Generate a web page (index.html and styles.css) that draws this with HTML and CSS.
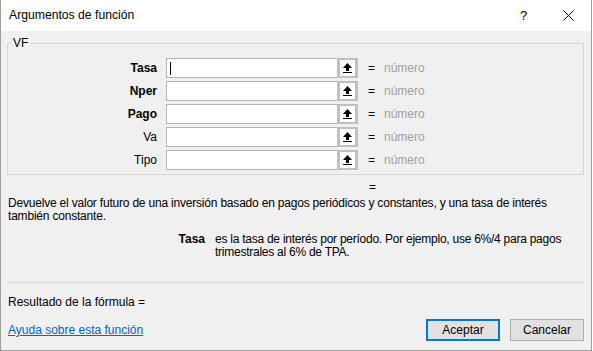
FILE: index.html
```html
<!DOCTYPE html>
<html lang="es">
<head>
<meta charset="utf-8">
<title>Argumentos de función</title>
<link rel="stylesheet" href="styles.css">
</head>
<body>
<div class="dialog">
  <div class="titlebar">
    <span class="title">Argumentos de función</span>
    <span class="tb-btn tb-help">?</span>
    <span class="tb-btn tb-close">
      <svg width="11" height="11" viewBox="0 0 11 11"><path d="M0.5 0.5 L10.5 10.5 M10.5 0.5 L0.5 10.5" stroke="#000" stroke-width="1" fill="none"/></svg>
    </span>
  </div>
  <div class="content">
    <fieldset class="group">
      <legend class="group-title">VF</legend>
      <div class="args">
        <div class="arg">
          <span class="arg-label bold">Tasa</span>
          <div class="field"><div class="input"><span class="caret"></span></div><div class="ref-btn"><span class="ref-inner"><svg width="9" height="10" viewBox="0 0 9 10"><path d="M4.5 0 L9 5 L6 5 L6 8 L3 8 L3 5 L0 5 Z" fill="#000"/><rect x="0" y="9" width="9" height="1" fill="#000"/></svg></span></div></div>
          <span class="eq">=</span><span class="val">número</span>
        </div>
        <div class="arg">
          <span class="arg-label bold">Nper</span>
          <div class="field"><div class="input"></div><div class="ref-btn"><span class="ref-inner"><svg width="9" height="10" viewBox="0 0 9 10"><path d="M4.5 0 L9 5 L6 5 L6 8 L3 8 L3 5 L0 5 Z" fill="#000"/><rect x="0" y="9" width="9" height="1" fill="#000"/></svg></span></div></div>
          <span class="eq">=</span><span class="val">número</span>
        </div>
        <div class="arg">
          <span class="arg-label bold">Pago</span>
          <div class="field"><div class="input"></div><div class="ref-btn"><span class="ref-inner"><svg width="9" height="10" viewBox="0 0 9 10"><path d="M4.5 0 L9 5 L6 5 L6 8 L3 8 L3 5 L0 5 Z" fill="#000"/><rect x="0" y="9" width="9" height="1" fill="#000"/></svg></span></div></div>
          <span class="eq">=</span><span class="val">número</span>
        </div>
        <div class="arg">
          <span class="arg-label">Va</span>
          <div class="field"><div class="input"></div><div class="ref-btn"><span class="ref-inner"><svg width="9" height="10" viewBox="0 0 9 10"><path d="M4.5 0 L9 5 L6 5 L6 8 L3 8 L3 5 L0 5 Z" fill="#000"/><rect x="0" y="9" width="9" height="1" fill="#000"/></svg></span></div></div>
          <span class="eq">=</span><span class="val">número</span>
        </div>
        <div class="arg">
          <span class="arg-label">Tipo</span>
          <div class="field"><div class="input"></div><div class="ref-btn"><span class="ref-inner"><svg width="9" height="10" viewBox="0 0 9 10"><path d="M4.5 0 L9 5 L6 5 L6 8 L3 8 L3 5 L0 5 Z" fill="#000"/><rect x="0" y="9" width="9" height="1" fill="#000"/></svg></span></div></div>
          <span class="eq">=</span><span class="val">número</span>
        </div>
      </div>
    </fieldset>
    <div class="result-eq">=</div>
    <p class="desc">Devuelve el valor futuro de una inversión basado en pagos periódicos y constantes, y una tasa de interés también constante.</p>
    <div class="argdesc">
      <span class="argdesc-name">Tasa</span>
      <span class="argdesc-text">es la tasa de interés por período. Por ejemplo, use 6%/4 para pagos trimestrales al 6% de TPA.</span>
    </div>
    <div class="sep"></div>
    <div class="formula">Resultado de la fórmula =</div>
    <div class="footer">
      <a class="help-link" href="#">Ayuda sobre esta función</a>
      <div class="buttons">
        <button class="btn btn-primary">Aceptar</button>
        <button class="btn">Cancelar</button>
      </div>
    </div>
  </div>
</div>
</body>
</html>
```
FILE: styles.css
```css
html, body {
  margin: 0;
  padding: 0;
  background: #ffffff;
}

.dialog {
  width: 592px;
  height: 351px;
  box-sizing: border-box;
  border: 1px solid #a0a0a0;
  border-top: none;
  background: #f0f0f0;
  font-family: "Liberation Sans", Arial, sans-serif;
  font-size: 12px;
  color: #000;
  display: flex;
  flex-direction: column;
}

.titlebar {
  height: 31px;
  flex: none;
  background: #ffffff;
  display: flex;
  align-items: center;
  padding-left: 8px;
}

.title {
  flex: 1;
  line-height: 31px;
  font-size: 12.2px;
}

.tb-btn {
  width: 45px;
  height: 31px;
  display: flex;
  align-items: center;
  justify-content: center;
}

.tb-help {
  font-size: 13px;
}

.tb-close svg {
  display: block;
}

.content {
  flex: 1;
  padding: 0 7px 0 6px;
  display: flex;
  flex-direction: column;
}

.group {
  margin: 4px 0 0 0;
  padding: 7px 0 4px 0;
  border: 1px solid #d5d5d5;
  min-width: 0;
}

.group-title {
  margin-left: 3px;
  padding: 0 2px;
  line-height: 16px;
  font-size: 12px;
}

.args {
  display: flex;
  flex-direction: column;
  gap: 3px;
}

.arg {
  display: flex;
  align-items: center;
  height: 20px;
  line-height: 20px;
}

.arg-label {
  width: 149px;
  text-align: right;
  margin-right: 9px;
}

.bold {
  font-weight: bold;
}

.field {
  display: flex;
  width: 192px;
  height: 20px;
}

.input {
  width: 171px;
  box-sizing: border-box;
  height: 20px;
  background: #fff;
  border: 1px solid #b4b4b4;
  border-right: none;
  padding-left: 3px;
  display: flex;
  align-items: center;
}

.caret {
  display: block;
  width: 1px;
  height: 13px;
  background: #000;
}

.ref-btn {
  width: 21px;
  height: 20px;
  box-sizing: border-box;
  background: #c0c0c0;
  padding: 2px 3px;
}

.ref-inner {
  display: flex;
  width: 15px;
  height: 16px;
  background: #fff;
  align-items: center;
  justify-content: center;
}

.ref-inner svg {
  display: block;
}

.eq {
  width: 16px;
  margin-left: 10px;
}

.val {
  color: #a0a0a0;
}

.result-eq {
  margin: 6px 0 0 362px;
  line-height: 13px;
}

.desc {
  margin: 3px 0 0 1px;
  line-height: 13px;
  letter-spacing: -0.2px;
}

.argdesc {
  margin-top: 10px;
  display: flex;
  line-height: 13px;
}

.argdesc-name {
  width: 197px;
  flex: none;
  text-align: right;
  font-weight: bold;
  margin-left: 1px;
}

.argdesc-text {
  margin-left: 10px;
  letter-spacing: -0.25px;
}

.sep {
  margin-top: 23px;
  height: 1px;
  background: #dadada;
}

.formula {
  margin-top: 13px;
  line-height: 13px;
  padding-left: 1px;
}

.footer {
  margin-top: 10px;
  display: flex;
  justify-content: space-between;
  align-items: flex-start;
}

.help-link {
  margin-top: 5px;
  line-height: 13px;
  padding-left: 1px;
  color: #0066cc;
  text-decoration: underline;
}

.buttons {
  display: flex;
  gap: 10px;
}

.btn {
  width: 74px;
  height: 22px;
  box-sizing: border-box;
  margin: 0;
  padding: 0;
  background: #e1e1e1;
  border: 1px solid #adadad;
  font-family: "Liberation Sans", Arial, sans-serif;
  font-size: 12px;
  color: #000;
}

.btn-primary {
  border: 2px solid #0078d7;
}
```
